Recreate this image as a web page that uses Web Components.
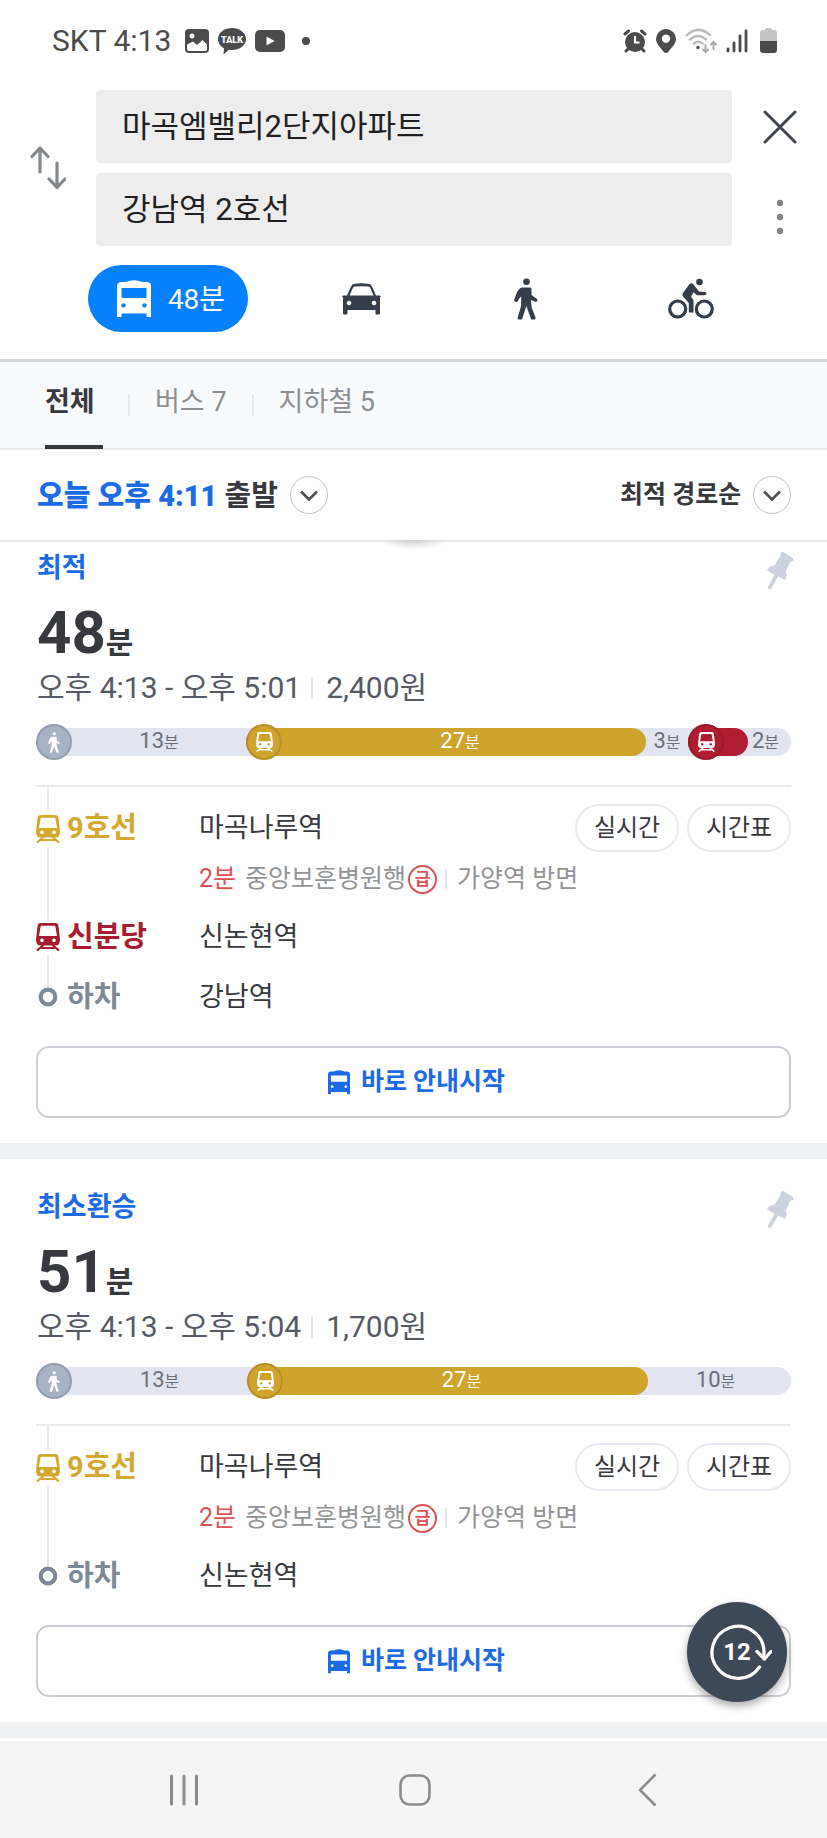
<!DOCTYPE html>
<html lang="ko">
<head>
<meta charset="utf-8">
<meta name="viewport" content="width=device-width, initial-scale=1">
<title>길찾기</title>
<style>
  body { margin: 0; background: #fff; font-family: Roboto, "Noto Sans CJK KR", sans-serif; color: #38393e; }
</style>
</head>
<body>
<transit-app></transit-app>

<script>
const base = `*{box-sizing:border-box} button,input,select{font:inherit;color:inherit;margin:0;padding:0;border:0;background:none;border-radius:0;outline:0} button{cursor:pointer;white-space:nowrap} :host([hidden]){display:none}`;

function define(name, html, setup) {
  const tpl = document.createElement('template');
  tpl.innerHTML = html.replace('<style>', '<style>' + base);
  customElements.define(name, class extends HTMLElement {
    constructor() {
      super();
      this.attachShadow({ mode: 'open' }).append(tpl.content.cloneNode(true));
    }
    connectedCallback() { if (setup) setup(this, this.shadowRoot); }
  });
}

/* name: [width, height, drawing] */
const ICONS = {
  photo: [24, 24, '<path fill="currentColor" fill-rule="evenodd" d="M4 0h16a4 4 0 0 1 4 4v16a4 4 0 0 1-4 4H4a4 4 0 0 1-4-4V4a4 4 0 0 1 4-4zM7 4.500a2.500 2.500 0 1 0 .01 0zM2 15.500V20a2 2 0 0 0 2 2h16a2 2 0 0 0 2-2v-4.500l-4.500-4.500-5.500 5-4-3.500z"/>'],
  talk: [28, 27, '<path fill="currentColor" d="M14 0c7.700 0 14 4.700 14 11s-6.300 11-14 11c-1 0-2-.1-3-.3L5.500 26.500 6 20.300C2.400 18.300 0 15 0 11 0 4.700 6.300 0 14 0z"/><text x="14" y="15" text-anchor="middle" font-size="9" font-weight="900" font-family="Roboto, sans-serif" fill="#fff">TALK</text>'],
  video: [30, 22, '<rect width="30" height="22" rx="5" fill="currentColor"/><path d="M11.500 6.500v9l8-4.500z" fill="#fff"/>'],
  alarm: [24, 24, '<g stroke="currentColor" stroke-width="3" stroke-linecap="round"><path d="M2 5l3.500-3M22 5l-3.500-3M3 22l3-3M21 22l-3-3"/></g><circle cx="12" cy="13" r="10" fill="currentColor"/><path d="M12 7v6.500h4.500" fill="none" stroke="#fff" stroke-width="2"/>'],
  pin: [20, 24, '<path fill="currentColor" fill-rule="evenodd" d="M10 0a10 10 0 0 1 10 10c0 5-5 9-8 13.200q-2 1.600-4 0C5 19 0 15 0 10A10 10 0 0 1 10 0zm0 5.500a4.200 4.200 0 1 0 .01 0z"/>'],
  wifi: [32, 26, '<g fill="none" stroke="#bbb" stroke-width="2.400" stroke-linecap="round"><path d="M1.500 7.500Q13-3.500 25 7M5 11.500q8-7 16 0M9 15.500q4-3.500 8.500 0"/><path stroke="#aaa" stroke-width="2" d="M20.500 17v7m-2.500-2.500l2.500 2.500 2.500-2.500M28.500 21v-7m-2.500 2.500l2.500-2.500 2.500 2.500"/></g><circle cx="13" cy="19.500" r="1.700" fill="currentColor"/>'],
  signal: [22, 24, '<g stroke="currentColor" stroke-width="2.800" stroke-linecap="round"><path d="M2 20v2M8 14v8M14 7v15M20 2v20"/></g>'],
  battery: [17, 26, '<path fill="#c4c4c4" d="M5 2a2 2 0 0 1 2-2h3a2 2 0 0 1 2 2h2a3 3 0 0 1 3 3v8H0V5a3 3 0 0 1 3-3z"/><path fill="currentColor" d="M0 13h17v9a3 3 0 0 1-3 3H3a3 3 0 0 1-3-3z"/>'],
  swap: [36, 44, '<g fill="none" stroke="currentColor" stroke-width="3.200" stroke-linecap="round" stroke-linejoin="round"><path d="M10 26V2M2 10.500L10 2l8 8.500M27 17v24M19 33l8 8.500 8-8.500"/></g>'],
  close: [34, 34, '<path stroke="currentColor" stroke-width="3" stroke-linecap="round" d="M2 2l30 30M32 2L2 32"/>'],
  more: [8, 36, '<g fill="currentColor"><circle cx="4" cy="4" r="3.200"/><circle cx="4" cy="18" r="3.200"/><circle cx="4" cy="32" r="3.200"/></g>'],
  bus: [34, 38, '<path fill="currentColor" fill-rule="evenodd" d="M9 2q8-3.500 16 0h5q4 .5 4 4v31h-4.500v-3.500h-25V37H0V6q0-3.500 4-4zM4.500 8v10h25V8zM6.500 23.200a2.200 2.200 0 1 0 .01 0zM27.500 23.200a2.200 2.200 0 1 0 .01 0z"/>'],
  car: [39, 32, '<path fill="currentColor" fill-rule="evenodd" d="M5 12.500L9 3.500Q10 1 13 .7q6.500-.9 13 0 3 .3 4 2.800l4 9h3.500q1.500 0 1.300 1.500H38v16.500q0 1-1 1h-2.500q-1 0-1-1V27h-28v3.500q0 1-1 1H2q-1 0-1-1V14H.2q-.2-1.500 1.300-1.500zM7.500 12.500h24l-3.200-7.500q-.5-1.200-2-1.400-6.500-.7-13.500 0-1.500.2-2 1.400zM7 17.800a2.300 2.300 0 1 0 .01 0zM32 17.800a2.300 2.300 0 1 0 .01 0z"/>'],
  walk: [24, 42, '<g fill="currentColor"><circle cx="12.500" cy="3.700" r="3.300"/><path d="M8 9.500h8q1.500 0 1.500 1.500V17l5 3.500q1.300.8.800 2l-.3.700q-.6 1-2 .5L17 22l.5 7 4 10.500q.2 2-1.500 2h-2.800L12.300 28 8 41.500H5Q3.300 41.500 3.600 40L7 28l.2-9.500-2.200 2.200L3.700 23.500q-1 .8-3 0-.8-1-.4-2.200l2.700-7Q5 10 8 9.500z"/></g>'],
  bike: [46, 41, '<g fill="none" stroke="currentColor" stroke-width="3.200"><circle cx="9.700" cy="31" r="8"/><circle cx="36.300" cy="31" r="8"/></g><circle cx="31.500" cy="4" r="3.300" fill="currentColor"/><path fill="currentColor" d="M21.500 6q2-1.500 3.800.2L31 13.500l6 .5q1.500.3 1.500 1.500t-1.500 1.700h-8l-3.500-3-2.500 4.500 2.500 3.300V34.500h-4.700V25l-5.600-6.300q-1.500-1.700-.4-3.500z"/>'],
  chevron: [18, 11, '<path fill="none" stroke="currentColor" stroke-width="2.700" d="M1 1.500l8 8 8-8"/>'],
  tack: [28, 37, '<path fill="currentColor" d="M15 .7q2-1.200 3.500 0l8 5q1.700 1.200.7 3.200l-2.700.8-5 10q2.500 4-.5 8.300l-7-3.800-6.500 12q-1 1.500-2.500.8-1.500-1-.8-2.500l6.300-11.800L1 18.500q2-4.700 7.500-5l6-9.500q-.5-2 .5-3.300z"/>'],
  train: [24, 28, '<path fill="currentColor" fill-rule="evenodd" d="M4.500 0h15q2.600 0 3 3L24 17q0 5.500-4.500 5.500h-15Q0 22.500 0 17L1.500 3Q2 0 4.500 0zM4.500 4L3 13h18L19.500 4q-.2-1.200-1.200-1.200H5.700q-1 0-1.200 1.200zM6 15.500a1.800 1.800 0 1 0 .01 0zM18 15.500a1.800 1.800 0 1 0 .01 0z"/><path fill="none" stroke="currentColor" stroke-width="2.200" d="M7.500 22L1 27.500M16.500 22l6.500 5.500M5 25h14"/>'],
  stop: [20, 20, '<circle cx="10" cy="10" r="7.300" fill="none" stroke="currentColor" stroke-width="4.200"/>'],
  refresh: [62, 56, '<g fill="none" stroke="currentColor" stroke-width="3.200" stroke-linecap="round" stroke-linejoin="round"><path d="M49.500 43A26 26 0 1 1 54 27.500v7.500M47 27.500l7.500 7.500 6.500-7.500"/></g>'],
  recents: [30, 32, '<g stroke="currentColor" stroke-width="3" stroke-linecap="round"><path d="M2.500 2v28M15 2v28M27.500 2v28"/></g>'],
  home: [32, 32, '<rect x="1.500" y="1.500" width="29" height="29" rx="9" fill="none" stroke="currentColor" stroke-width="2.600"/>'],
  back: [20, 34, '<path fill="none" stroke="currentColor" stroke-width="2.600" d="M18.500 1.500L3 17l15.500 15.500"/>']
};

define('map-icon', `<style>:host{display:inline-flex;flex:none}svg{display:block}</style>`, (el, root) => {
  if (root.querySelector('svg')) return;
  const [w, h, art] = ICONS[el.getAttribute('name')];
  const width = Number(el.getAttribute('width')) || w;
  const box = document.createElement('span');
  box.innerHTML = `<svg aria-hidden="true" viewBox="0 0 ${w} ${h}" width="${width}" height="${Math.round(width * h / w)}">${art}</svg>`;
  root.append(box.firstChild);
});

define('status-bar', `<style>
  :host{display:flex;align-items:center;height:82px;padding:0 50px 0 52px;color:#4b4b4b;font-size:30px;line-height:40px}
  .left,.right{display:flex;align-items:center}
  .left{gap:9px}.left span{margin-right:5px}
  .right{margin-left:auto;gap:9px}
  i{width:8px;height:8px;border-radius:50%;background:currentColor;margin-left:8px}
  .right map-icon:last-child{margin-left:3px}
</style>
<div class="left"><span>SKT 4:13</span><map-icon name="photo"></map-icon><map-icon name="talk"></map-icon><map-icon name="video"></map-icon><i></i></div>
<div class="right"><map-icon name="alarm"></map-icon><map-icon name="pin"></map-icon><map-icon name="wifi"></map-icon><map-icon name="signal"></map-icon><map-icon name="battery"></map-icon></div>`);

define('search-fields', `<style>
  :host{display:grid;grid-template-columns:96px 1fr 95px;padding-top:8px}
  .swap{color:#84888d;display:flex;align-items:center;justify-content:center;align-self:center}
  .fields{display:grid;gap:10px}
  input{display:block;width:100%;height:73px;padding:0 26px 6px;background:#ededed;border-radius:4px;font-size:31px;color:#1f1f21}
  .side{display:grid;grid-template-rows:73px 73px;gap:10px}
  .side button{display:grid;place-items:center;color:#3f444d}
  .side .more{color:#808488;padding-top:14px}
</style>
<button class="swap" aria-label="출발지와 도착지 바꾸기"><map-icon name="swap"></map-icon></button>
<div class="fields"><input aria-label="출발지" value="마곡엠밸리2단지아파트"><input aria-label="도착지" value="강남역 2호선"></div>
<div class="side"><button aria-label="닫기"><map-icon name="close"></map-icon></button><button class="more" aria-label="더보기"><map-icon name="more"></map-icon></button></div>`);

define('mode-bar', `<style>
  :host{display:flex;align-items:center;padding:19px 54px 27px 88px;border-bottom:3px solid #d3d5d8}
  button{display:flex;align-items:center;justify-content:center;height:67px;flex:1;color:#343d49}
  button.on{flex:none;width:160px;margin-right:31px;padding-left:6px;gap:17px;border-radius:34px;background:#0580ff;color:#fff;font-size:28px;line-height:40px}
  button.on span{padding-top:3px}
</style>
<button class="on"><map-icon name="bus"></map-icon><span>48분</span></button>
<button aria-label="자동차"><map-icon name="car"></map-icon></button>
<button aria-label="도보"><map-icon name="walk"></map-icon></button>
<button aria-label="자전거"><map-icon name="bike"></map-icon></button>`);

define('route-tabs', `<style>
  :host{display:flex;align-items:center;height:88px;padding-left:45px;background:#f9fafc;border-bottom:2px solid #e7e9ed;font-size:27px;line-height:40px;color:#8d8e91}
  button{height:88px;padding-bottom:2px;border-bottom:4px solid transparent}
  .on{width:58px;text-align:left;color:#38393e;font-weight:700;border-color:#38393e}
  i{width:2px;height:22px;margin:0 25px;background:#e6e8eb}
</style>
<button class="on">전체</button><i></i><button>버스 7</button><i></i><button>지하철 5</button>`);

define('sort-row', `<style>
  :host{display:flex;align-items:center;justify-content:space-between;height:92px;padding:0 36px;border-bottom:2px solid #e6e9eb;position:relative;font-weight:700;line-height:40px}
  .time{display:flex;align-items:center;gap:12px;font-size:29px;padding-left:1px}
  .time>span:first-child{padding-top:2px}
  .time b{color:#1c6be6}
  .ring{display:grid;place-items:center;width:38px;height:38px;border:1px solid #c2c3c6;border-radius:50%;color:#515257}
  label{display:grid;align-items:center;font-size:25px}
  label>*{grid-area:1/1}
  label .ring{justify-self:end;pointer-events:none}
  select{appearance:none;padding-right:49px;height:40px}
  .pull{position:absolute;top:100%;left:50%;width:72px;height:10px;margin-left:-36px;background:radial-gradient(ellipse at 50% 0,#cfcfcf,#fff0 68%)}
</style>
<button class="time"><span><b>오늘 오후 4:11</b> 출발</span><span class="ring"><map-icon name="chevron"></map-icon></span></button>
<label><select aria-label="정렬"><option>최적 경로순</option></select><span class="ring"><map-icon name="chevron"></map-icon></span></label>
<div class="pull"></div>`);

define('time-bar', `<style>:host{display:flex;height:28px;margin:4px 0;border-radius:14px;background:#e2e5ef}</style><slot></slot>`);

define('time-part', `<style>
  :host{display:flex;align-items:center;min-width:0;height:28px;font-size:22px;line-height:28px;color:#6b6f7a}
  .disc{display:none;flex:none;place-items:center;width:36px;height:36px;border-radius:50%;color:#fff;border:2px solid #0000001f}
  :host([icon]) .disc{display:grid}
  span{flex:1;text-align:center;white-space:nowrap}
  small{font-size:16px}
  :host([kind=walk]) .disc{background:#a7b3c5}
  :host([kind=line9]),:host([kind=line9]) .disc{background:#cfa42c}
  :host([kind=dx]),:host([kind=dx]) .disc{background:#b01c32}
  :host([kind=line9]),:host([kind=dx]){color:#fff;border-radius:14px}
  :host([kind=line9]) span,:host([last]) span{padding-right:8px}
</style>
<div class="disc"></div><span><slot></slot></span>`, (el, root) => {
  el.style.flex = `${el.getAttribute('span')} 1 0`;
  const icon = el.getAttribute('icon'), disc = root.querySelector('.disc');
  if (icon) disc.innerHTML = `<map-icon name="${icon}" width="${icon === 'walk' ? 12 : 17}"></map-icon>`;
  const mins = el.getAttribute('min');
  if (mins) root.querySelector('span').innerHTML = `${mins}<small>분</small>`;
});

define('route-step', `<style>
  :host{display:grid;grid-template-columns:24px 139px 1fr auto;color:#38393e;font-size:27px;line-height:40px}
  .rail{grid-row:1/3;display:flex;flex-direction:column;align-items:center;color:var(--line)}
  .rail i{width:2px;height:12px;background:#e6e9f0}
  .rail i:last-child{flex:1;height:auto}
  .rail map-icon{height:36px;align-items:center}
  b{padding-left:7px;font-size:29px;color:var(--line)}
  b,.name,.actions{height:60px;display:flex;align-items:center}
  .actions{gap:8px}
  .more{grid-column:3/5;display:none}
  :host([board]) .more{display:flex;height:44px;margin-bottom:6px}
  :host([board]) .rail i:first-child{height:24px}
  :host([board]) :is(b,.name,.actions){height:58px;margin-top:12px}
  :host([end]) .rail i:first-child,:host([end]) .rail map-icon{height:20px}
  :host([end]) .rail i:last-child{visibility:hidden}
</style>
<div class="rail"><i></i></div><b></b><span class="name"><slot></slot></span><div class="actions"><slot name="actions"></slot></div><div class="more"><slot name="more"></slot></div>`, (el, root) => {
  const kinds = { line9: ['train', '#d3a92f'], dx: ['train', '#a61d31'], end: ['stop', '#7f8996'] };
  const [icon, color] = kinds[el.getAttribute('kind')];
  el.style.setProperty('--line', color);
  root.querySelector('.rail').innerHTML = `<i></i><map-icon name="${icon}"></map-icon><i></i>`;
  root.querySelector('b').textContent = el.getAttribute('label');
});

define('pill-button', `<style>:host{display:block}button{height:48px;width:104px;border:2px solid #e7e9f1;border-radius:24px;font-size:24px;line-height:40px;color:#38393e;background:#fff}</style><button><slot></slot></button>`);

define('arrival-info', `<style>
  :host{display:flex;align-items:center;font-size:25px;line-height:40px;color:#939496;white-space:nowrap}
  em{font-style:normal;color:#dc5257;margin-right:9px}
  b{display:grid;place-items:center;width:29px;height:29px;border:2px solid #dc5257;border-radius:50%;font-size:17px;line-height:24px;color:#dc5257;margin-left:2px}
  i{width:2px;height:20px;margin:0 10px 0 8px;background:#e4e6e9}
</style><em>2분</em><span>중앙보훈병원행</span><b>급</b><i></i><span>가양역 방면</span>`);

define('start-button', `<style>
  :host{display:block;margin-top:19px}
  button{display:flex;align-items:center;justify-content:center;gap:11px;width:100%;height:72px;padding-left:6px;border:2px solid #cbced4;border-radius:13px;font-size:25px;font-weight:700;line-height:40px;color:#1c6be6}
</style><button><map-icon name="bus" width="22"></map-icon><span>바로 안내시작</span></button>`);

define('route-card', `<style>
  :host{display:block;padding:28px 36px 25px;border-bottom:16px solid #eff1f3}
  :host([scrolled]){padding-top:6px}
  .top{display:flex;align-items:center;justify-content:space-between;height:40px;font-size:27px;line-height:40px;font-weight:700;color:#1c6be6}
  .tack{color:#cbd2de;display:flex;margin-right:-3px;padding-top:5px}
  .top,h2,.when{padding-left:1px}
  h2{margin:10px 0 0;display:flex;align-items:baseline;height:70px;font-size:60px;line-height:70px;font-weight:700}
  h2 small{font-size:30px;line-height:40px}
  .when{display:flex;align-items:center;margin:0;padding-bottom:17px;font-size:30px;line-height:40px;height:56px;color:#555a65}
  .when i{width:2px;height:22px;margin:0 13px 0 10px;background:#e2e4e8}
  .steps{margin-top:29px;border-top:2px solid #e8eaed}
</style>
<div class="top"><slot name="tag"></slot><button class="tack" aria-label="경로 고정"><map-icon name="tack"></map-icon></button></div>
<h2><slot name="mins"></slot><small>분</small></h2>
<p class="when"><slot name="hours"></slot><i></i><slot name="fare"></slot></p>
<slot name="bar"></slot>
<div class="steps"><slot></slot></div>
<start-button></start-button>`);

define('refresh-button', `<style>
  :host{position:absolute;right:40px;bottom:39px}
  button{display:grid;place-items:center;width:100px;height:100px;border-radius:50%;background:#3e4957;color:#fff;box-shadow:0 4px 9px #0005}
  button>*{grid-area:1/1}
  map-icon{padding-left:8px}
  span{font-size:24px;line-height:30px;font-weight:700}
</style><button aria-label="새로고침 12"><map-icon name="refresh"></map-icon><span>12</span></button>`);

define('nav-bar', `<style>
  :host{display:grid;grid-template-columns:repeat(3,1fr);height:97px;padding:0 64px 0 68px;background:#f5f5f5;color:#8b8b8b}
  button{display:grid;place-items:center}
</style><button aria-label="최근 앱"><map-icon name="recents"></map-icon></button><button aria-label="홈"><map-icon name="home"></map-icon></button><button aria-label="뒤로"><map-icon name="back"></map-icon></button>`);

define('transit-app', `<style>
  :host{display:flex;flex-direction:column;min-height:100vh}
  main{position:relative;flex:1;padding-bottom:3px}
</style>
<status-bar></status-bar>
<search-fields></search-fields>
<mode-bar></mode-bar>
<route-tabs></route-tabs>
<sort-row></sort-row>
<main>
  <route-card scrolled>
    <span slot="tag">최적</span><span slot="mins">48</span>
    <span slot="hours">오후 4:13 - 오후 5:01</span><span slot="fare">2,400원</span>
    <time-bar slot="bar">
      <time-part kind="walk" icon="walk" span="210" min="13"></time-part>
      <time-part kind="line9" icon="train" span="400" min="27"></time-part>
      <time-part span="42" min="3"></time-part>
      <time-part kind="dx" icon="train" span="60"></time-part>
      <time-part last span="43" min="2"></time-part>
    </time-bar>
    <route-step kind="line9" label="9호선" board>마곡나루역
      <pill-button slot="actions">실시간</pill-button><pill-button slot="actions">시간표</pill-button>
      <arrival-info slot="more"></arrival-info>
    </route-step>
    <route-step kind="dx" label="신분당">신논현역</route-step>
    <route-step kind="end" label="하차" end>강남역</route-step>
  </route-card>
  <route-card>
    <span slot="tag">최소환승</span><span slot="mins">51</span>
    <span slot="hours">오후 4:13 - 오후 5:04</span><span slot="fare">1,700원</span>
    <time-bar slot="bar">
      <time-part kind="walk" icon="walk" span="211" min="13"></time-part>
      <time-part kind="line9" icon="train" span="401" min="27"></time-part>
      <time-part last span="143" min="10"></time-part>
    </time-bar>
    <route-step kind="line9" label="9호선" board>마곡나루역
      <pill-button slot="actions">실시간</pill-button><pill-button slot="actions">시간표</pill-button>
      <arrival-info slot="more"></arrival-info>
    </route-step>
    <route-step kind="end" label="하차" end>신논현역</route-step>
  </route-card>
  <refresh-button></refresh-button>
</main>
<nav-bar></nav-bar>`);
</script>
</body>
</html>
